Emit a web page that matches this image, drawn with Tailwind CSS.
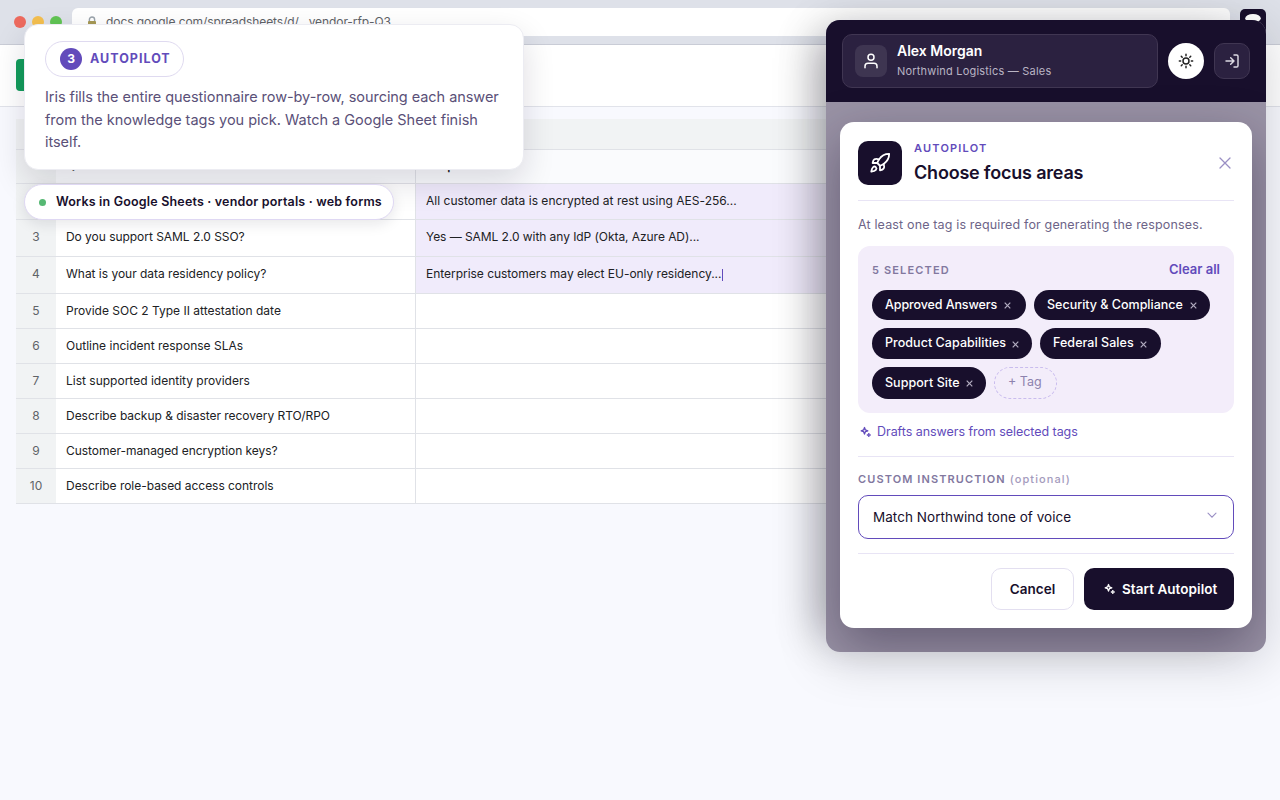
<!DOCTYPE html>
<html lang="en">
<head>
  <meta charset="UTF-8">
  <title>Iris Autopilot</title>
  <script src="https://cdn.jsdelivr.net/npm/@tailwindcss/browser@4"></script>
</head>
<body class="relative w-[1280px] h-[800px] overflow-hidden bg-[#f8f9fe] font-['Inter',sans-serif] text-[#180f2c]">

  <!-- Browser bar -->
  <div class="flex items-center h-[45px] pl-[14px] pr-[14px] bg-[#dee1e9] border-b border-[#c9ccd6]">
    <div class="flex gap-[6px]">
      <span class="size-3 rounded-full bg-[#ed6a5e]"></span>
      <span class="size-3 rounded-full bg-[#f4bf4f]"></span>
      <span class="size-3 rounded-full bg-[#61c554]"></span>
    </div>
    <div class="flex items-center flex-1 h-7 ml-[10px] mr-[10px] pl-[14px] rounded-md bg-white text-[12px] text-[#5f6368]">
      <svg class="w-3 h-3 mr-2" viewBox="0 0 12 12" fill="none">
        <path d="M3.4 6V3.6a2.6 2.6 0 0 1 5.2 0V6" stroke="#9aa3ab" stroke-width="1.4"/>
        <rect x="2" y="5" width="8" height="6.5" rx="1" fill="#a79a55"/>
      </svg>
      <span class="tracking-[-0.08px]">docs.google.com/spreadsheets/d/…vendor-rfp-Q3</span>
    </div>
    <svg class="size-[26px]" viewBox="0 0 26 26">
      <rect width="26" height="26" rx="5" fill="#180f2c"/>
      <ellipse cx="13" cy="9.3" rx="7.8" ry="4.3" fill="#fff"/>
    </svg>
  </div>

  <!-- Sheet header -->
  <div class="flex items-start h-[62px] px-4 pt-[14px] bg-white border-b border-[#e1e3ea]">
    <div class="w-6 h-8 rounded bg-[#129d5b]"></div>
  </div>

  <!-- Sheet -->
  <div class="mt-3 mx-4 w-[1248px] bg-white text-[12px] text-[#202124] *:grid *:grid-cols-[40px_360px_1fr] *:border-b *:border-[#e0e2e7]">
    <div class="h-[31px] bg-[#f1f3f4]"></div>
    <div class="h-[34px] bg-[#fafbfd] font-semibold *:flex *:items-center *:pb-0.5">
      <div class="justify-center bg-[#f1f3f4] text-[#5f6368] font-normal"></div>
      <div class="px-[10px] border-r border-[#e0e2e7]">Question</div>
      <div class="px-[10px]">Response</div>
    </div>
    <div class="h-9 *:flex *:items-center *:pb-px">
      <div class="justify-center bg-[#f1f3f4] text-[#5f6368]">2</div>
      <div class="px-[10px] border-r border-[#e0e2e7]"></div>
      <div class="px-[10px] bg-[#f0ebfb] tracking-[0.02px]">All customer data is encrypted at rest using AES-256...</div>
    </div>
    <div class="h-[37px] *:flex *:items-center *:pb-0.5">
      <div class="justify-center bg-[#f1f3f4] text-[#5f6368]">3</div>
      <div class="px-[10px] border-r border-[#e0e2e7] tracking-[-0.04px]">Do you support SAML 2.0 SSO?</div>
      <div class="px-[10px] bg-[#f0ebfb] tracking-[-0.06px]">Yes — SAML 2.0 with any IdP (Okta, Azure AD)...</div>
    </div>
    <div class="h-[37px] *:flex *:items-center *:pb-0.5">
      <div class="justify-center bg-[#f1f3f4] text-[#5f6368]">4</div>
      <div class="px-[10px] border-r border-[#e0e2e7] tracking-[-0.02px]">What is your data residency policy?</div>
      <div class="px-[10px] bg-[#f0ebfb] tracking-[-0.03px]">Enterprise customers may elect EU-only residency...<span class="w-px h-3 ml-px mt-0.5 bg-[#624bbb]"></span></div>
    </div>
    <div class="h-[35px] *:flex *:items-center">
      <div class="justify-center bg-[#f1f3f4] text-[#5f6368]">5</div>
      <div class="px-[10px] border-r border-[#e0e2e7]">Provide SOC 2 Type II attestation date</div>
    </div>
    <div class="h-[35px] *:flex *:items-center">
      <div class="justify-center bg-[#f1f3f4] text-[#5f6368]">6</div>
      <div class="px-[10px] border-r border-[#e0e2e7]">Outline incident response SLAs</div>
    </div>
    <div class="h-[35px] *:flex *:items-center">
      <div class="justify-center bg-[#f1f3f4] text-[#5f6368]">7</div>
      <div class="px-[10px] border-r border-[#e0e2e7]">List supported identity providers</div>
    </div>
    <div class="h-[35px] *:flex *:items-center">
      <div class="justify-center bg-[#f1f3f4] text-[#5f6368]">8</div>
      <div class="px-[10px] border-r border-[#e0e2e7] tracking-[-0.03px]">Describe backup &amp; disaster recovery RTO/RPO</div>
    </div>
    <div class="h-[35px] *:flex *:items-center">
      <div class="justify-center bg-[#f1f3f4] text-[#5f6368]">9</div>
      <div class="px-[10px] border-r border-[#e0e2e7] tracking-[-0.04px]">Customer-managed encryption keys?</div>
    </div>
    <div class="h-[35px] *:flex *:items-center">
      <div class="justify-center bg-[#f1f3f4] text-[#5f6368]">10</div>
      <div class="px-[10px] border-r border-[#e0e2e7] tracking-[-0.03px]">Describe role-based access controls</div>
    </div>
  </div>

  <!-- Caption card -->
  <div class="absolute left-6 top-6 w-[500px] h-[146px] px-5 pt-4 rounded-[14px] bg-white border border-[#ececf2] shadow-[0_12px_32px_rgba(24,15,44,0.14)]">
    <div class="flex items-center w-[139px] h-9 pl-[14px] rounded-full border border-[#dfdaf0] text-[#624bbb]">
      <span class="flex items-center justify-center size-[22px] mr-2 rounded-full bg-[#624bbb] text-white text-[12px] font-bold">3</span>
      <span class="text-[12.5px] font-bold tracking-[1px]">AUTOPILOT</span>
    </div>
    <p class="mt-[9px] text-[14.5px] leading-[22.5px] tracking-[-0.05px] text-[#5a5078] whitespace-nowrap">Iris fills the entire questionnaire row-by-row, sourcing each answer<br><span class="tracking-[-0.02px]">from the knowledge tags you pick. Watch a Google Sheet finish</span><br>itself.</p>
  </div>

  <!-- Works-in pill -->
  <div class="absolute left-6 top-[184px] flex items-center w-[370px] h-9 pl-[14px] rounded-full bg-white border border-[#dfd8f3] shadow-[0_4px_14px_rgba(24,15,44,0.10)] whitespace-nowrap">
    <span class="size-[7px] mr-[10px] rounded-full bg-[#56b873]"></span>
    <span class="text-[12.5px] font-semibold tracking-[0.18px]">Works in Google Sheets · vendor portals · web forms</span>
  </div>

  <!-- Side panel -->
  <div class="absolute left-[826px] top-5 w-[440px] h-[632px] rounded-[14px] shadow-[0_8px_50px_rgba(10,10,20,0.18),-26px_0_40px_-18px_rgba(10,6,20,0.30)]">
    <div class="h-full overflow-hidden rounded-[14px] bg-[#9992a5]">
      <div class="flex items-center h-[82px] px-4 bg-[#180f2c] text-white">
        <div class="flex items-center w-[316px] h-[54px] pl-3 rounded-[10px] bg-[#2b2140] border border-[#403652]">
          <div class="flex items-center justify-center size-8 rounded-lg bg-[#3e3551]">
            <svg class="size-[18px]" viewBox="0 0 24 24" fill="none" stroke="currentColor" stroke-width="2" stroke-linecap="round" stroke-linejoin="round"><path d="M20 21v-2a4 4 0 0 0-4-4H8a4 4 0 0 0-4 4v2"/><circle cx="12" cy="7" r="4"/></svg>
          </div>
          <div class="ml-[10px]">
            <div class="text-[14px] leading-5 font-semibold">Alex Morgan</div>
            <div class="text-[11px] leading-5 tracking-[0.2px] text-[#b9b4c4]">Northwind Logistics — Sales</div>
          </div>
        </div>
        <div class="flex items-center justify-center size-9 ml-[10px] rounded-full bg-white text-[#222]">
          <svg class="size-4" viewBox="0 0 24 24" fill="none" stroke="currentColor" stroke-width="2.2" stroke-linecap="round" stroke-linejoin="round"><circle cx="12" cy="12" r="4.5"/><path d="M12 2v2M12 20v2M4.9 4.9l1.4 1.4M17.700 17.700l1.400 1.400M2 12h2M20 12h2M4.900 19.100l1.400-1.400M17.700 6.300l1.400-1.400"/></svg>
        </div>
        <div class="flex items-center justify-center size-9 ml-[10px] rounded-[10px] bg-[#2b2140] border border-[#403652] text-[#dcd9e2]">
          <svg class="size-4" viewBox="0 0 24 24" fill="none" stroke="currentColor" stroke-width="2.2" stroke-linecap="round" stroke-linejoin="round"><path d="M15 3h4a2 2 0 0 1 2 2v14a2 2 0 0 1-2 2h-4M10 17l5-5-5-5M15 12H3"/></svg>
        </div>
      </div>

      <!-- Focus areas dialog -->
      <div class="mt-5 mx-[14px] h-[506px] px-[18px] pt-[18px] rounded-[14px] bg-white shadow-[0_18px_50px_rgba(24,15,44,0.40)]">
        <div class="flex h-[61px] pt-px border-b border-[#e8e4f5]">
          <div class="flex items-center justify-center size-11 rounded-[10px] bg-[#180f2c] text-white">
            <svg class="size-[22px]" viewBox="0 0 24 24" fill="none" stroke="currentColor" stroke-width="2" stroke-linecap="round" stroke-linejoin="round"><path d="M4.5 16.5c-1.5 1.26-2 5-2 5s3.74-.5 5-2c.71-.84.7-2.13-.09-2.91a2.18 2.18 0 0 0-2.91-.09z"/><path d="m12 15-3-3a22 22 0 0 1 2-3.95A12.88 12.88 0 0 1 22 2c0 2.72-.78 7.5-6 11a22.35 22.35 0 0 1-4 2z"/><path d="M9 12H4s.55-3.03 2-4c1.62-1.08 5 0 5 0M12 15v5s3.03-.55 4-2c1.08-1.62 0-5 0-5"/></svg>
          </div>
          <div class="ml-3">
            <div class="text-[11px] leading-[14px] font-semibold tracking-[1.2px] text-[#624bbb]">AUTOPILOT</div>
            <div class="mt-[6px] text-[18px] leading-6 font-semibold tracking-[-0.2px]">Choose focus areas</div>
          </div>
          <svg class="size-[18px] ml-auto mt-[13px]" viewBox="0 0 18 18" fill="none" stroke="#9a8fc4" stroke-width="1.3" stroke-linecap="round"><path d="M4 4l10 10M14 4L4 14"/></svg>
        </div>

        <p class="mt-[14px] text-[12.5px] leading-5 tracking-[0.15px] text-[#6d6488]">At least one tag is required for generating the responses.</p>

        <div class="mt-[11px] h-[167px] px-[14px] pt-[14px] rounded-xl bg-[#f3edfa]">
          <div class="flex items-center justify-between h-5 text-[#624bbb]">
            <span class="text-[11px] font-semibold tracking-[1.15px] text-[#82789f]">5 SELECTED</span>
            <span class="text-[13px] font-semibold">Clear all</span>
          </div>
          <div class="mt-[10px] space-y-2 text-[12.5px] font-medium text-white *:flex *:gap-2">
            <div>
              <span class="flex items-center w-[154px] h-[30px] pl-[13px] rounded-full bg-[#180f2c] tracking-[-0.1px]">Approved Answers<svg class="size-[7px] ml-[7px] mt-px" viewBox="0 0 7 7" stroke="#b3adc1" stroke-width="1.2"><path d="M.7.7l5.6 5.6M6.3.7L.7 6.3"/></svg></span>
              <span class="flex items-center w-[176px] h-[30px] pl-[13px] rounded-full bg-[#180f2c]">Security &amp; Compliance<svg class="size-[7px] ml-[7px] mt-px" viewBox="0 0 7 7" stroke="#b3adc1" stroke-width="1.2"><path d="M.7.7l5.6 5.6M6.3.7L.7 6.3"/></svg></span>
            </div>
            <div>
              <span class="flex items-center w-40 h-[31px] pl-[13px] rounded-full bg-[#180f2c] tracking-[0.05px]">Product Capabilities<svg class="size-[7px] ml-[6px] mt-px" viewBox="0 0 7 7" stroke="#b3adc1" stroke-width="1.2"><path d="M.7.7l5.6 5.6M6.3.7L.7 6.3"/></svg></span>
              <span class="flex items-center w-[121px] h-[31px] pl-[13px] rounded-full bg-[#180f2c] tracking-[0.05px]">Federal Sales<svg class="size-[7px] ml-[6px] mt-px" viewBox="0 0 7 7" stroke="#b3adc1" stroke-width="1.2"><path d="M.7.7l5.6 5.6M6.3.7L.7 6.3"/></svg></span>
            </div>
            <div>
              <span class="flex items-center w-[114px] h-8 pl-[13px] rounded-full bg-[#180f2c] tracking-[0.05px]">Support Site<svg class="size-[7px] ml-[6px] mt-px" viewBox="0 0 7 7" stroke="#b3adc1" stroke-width="1.2"><path d="M.7.7l5.6 5.6M6.3.7L.7 6.3"/></svg></span>
              <span class="flex items-center w-[63px] h-8 pl-[13px] pb-0.5 rounded-full border border-dashed border-[#c9bcee] font-normal text-[#8d82ae]">+ Tag</span>
            </div>
          </div>
        </div>

        <div class="flex items-center mt-[9px] h-5 pl-[2px] text-[12.5px] text-[#624bbb]">
          <svg class="w-[11px] h-3 mr-[6px]" viewBox="0 0 11 12" fill="none" stroke="currentColor" stroke-linejoin="round"><path stroke-width="1.3" d="M4.500 1.500l.9 2.400 2.400.9-2.400.9-.9 2.400-.9-2.400-2.400-.9 2.400-.9z"/><path fill="currentColor" stroke-width=".7" d="M8.800 7l.6 1.400 1.400.6-1.400.6-.6 1.400-.6-1.400-1.400-.6 1.400-.6z"/></svg>
          <span class="tracking-[-0.05px]">Drafts answers from selected tags</span>
        </div>

        <div class="mt-[14px] pt-[14px] border-t border-[#e8e4f5]">
          <div class="text-[11px] leading-4 font-semibold tracking-[1.1px] text-[#82789f]">CUSTOM INSTRUCTION <span class="font-medium text-[#a49bbd]">(optional)</span></div>
          <div class="flex items-center justify-between mt-2 h-11 px-[14px] pt-px rounded-[10px] border border-[#624bbb] text-[13.5px] tracking-[0.04px]">
            Match Northwind tone of voice
            <svg class="w-[14px] h-[14px] mb-[5px]" viewBox="0 0 14 14" fill="none" stroke="#9a8fc4" stroke-width="1.1" stroke-linecap="round"><path d="M3 5.200l4 4 4-4"/></svg>
          </div>
        </div>

        <div class="flex justify-end gap-[10px] mt-[14px] pt-[14px] border-t border-[#e8e4f5] text-[13.5px] font-semibold">
          <div class="flex items-center justify-center w-[83px] h-[42px] rounded-[10px] border border-[#e3dff0]">Cancel</div>
          <div class="flex items-center w-[150px] h-[42px] pl-5 rounded-[10px] bg-[#180f2c] text-white tracking-[0.05px]">
            <svg class="w-[11px] h-3 mr-[7px]" viewBox="0 0 11 12" fill="none" stroke="currentColor" stroke-linejoin="round"><path stroke-width="1.3" d="M4.500 1.500l.9 2.400 2.400.9-2.400.9-.9 2.400-.9-2.400-2.400-.9 2.400-.9z"/><path fill="currentColor" stroke-width=".7" d="M8.800 7l.6 1.400 1.400.6-1.400.6-.6 1.400-.6-1.400-1.400-.6 1.400-.6z"/></svg>
            Start Autopilot
          </div>
        </div>
      </div>
    </div>
  </div>

</body>
</html>
